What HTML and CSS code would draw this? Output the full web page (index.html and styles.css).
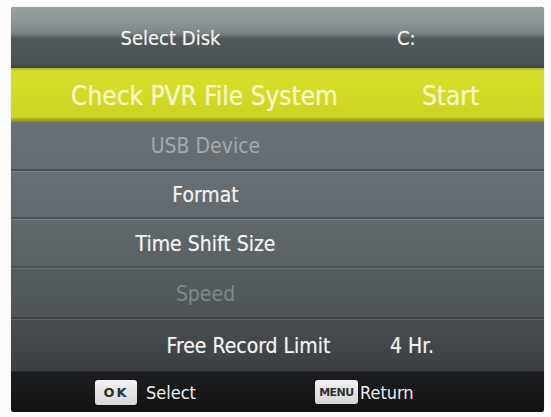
FILE: index.html
```html
<!DOCTYPE html>
<html lang="en">
<head>
<meta charset="utf-8">
<title>PVR File System</title>
<link rel="stylesheet" href="styles.css">
</head>
<body>
<div class="screen">
  <div class="row row-top">
    <span class="label label-disk">Select Disk</span>
    <span class="value value-disk">C:</span>
  </div>
  <div class="row row-active">
    <span class="label label-check">Check PVR File System</span>
    <span class="value value-start">Start</span>
  </div>
  <div class="row row-usb">
    <span class="label dim">USB Device</span>
  </div>
  <div class="row row-format">
    <span class="label">Format</span>
  </div>
  <div class="row row-shift">
    <span class="label">Time Shift Size</span>
  </div>
  <div class="row row-speed">
    <span class="label dimmer">Speed</span>
  </div>
  <div class="row row-limit">
    <span class="label label-limit">Free Record Limit</span>
    <span class="value value-limit">4 Hr.</span>
  </div>
  <div class="hints">
    <div class="hint hint-ok"><span class="key key-ok">OK</span><span class="hint-text">Select</span></div>
    <div class="hint hint-menu"><span class="key key-menu">MENU</span><span class="hint-text">Return</span></div>
  </div>
</div>
</body>
</html>
```
FILE: styles.css
```css
html, body {
  margin: 0;
  padding: 0;
  background: #fbfbfb;
}

body {
  font-family: "Liberation Sans Narrow", "DejaVu Sans Condensed", "Liberation Sans", sans-serif;
  color: #f2f2ee;
}

.screen {
  margin: 7px 7px 0 11px;
  width: 533px;
  height: 405px;
  display: flex;
  flex-direction: column;
  border-radius: 3px;
  overflow: hidden;
  background: #5f666a;
  box-shadow: 0 0 1px rgba(0, 0, 0, 0.4);
}

.row {
  display: grid;
  grid-template-columns: 389px 1fr;
  align-items: center;
  font-size: 21px;
  text-shadow: 0 0 1px rgba(255, 255, 255, 0.45);
  box-shadow: inset 0 -2px 0 #4a5154, inset 0 1px 0 #7b8388;
}

.label {
  text-align: center;
}

.value {
  white-space: nowrap;
}

/* header row with the glossy band */
.row-top {
  height: 61px;
  background: linear-gradient(to bottom, #9ba0a1 0, #8d9599 22%, #7d8589 42%, #51585b 52%, #4c5356 92%, #3f4547 100%);
  box-shadow: none;
  font-size: 20px;
}

.label-disk {
  padding-right: 70px;
}

.value-disk {
  margin-left: -3px;
}

/* highlighted entry */
.row-active {
  height: 53px;
  padding-top: 3px;
  box-sizing: border-box;
  background: linear-gradient(to bottom, #a8b020 0, #d6e02a 6%, #d2dc26 50%, #ccd422 92%, #8e9418 100%);
  box-shadow: none;
  font-size: 26px;
  color: #f3f4c8;
  text-shadow: 0 0 1px rgba(255, 255, 220, 0.6);
}

.label-check {
  padding-right: 2px;
}

.value-start {
  padding-left: 22px;
}

.row-usb {
  height: 50px;
  background: linear-gradient(to bottom, #6a7277, #656c71);
}

.row-format {
  height: 48px;
  background: linear-gradient(to bottom, #686f74, #62696e);
}

.row-shift {
  height: 49px;
  background: linear-gradient(to bottom, #61686c, #5a6165);
}

.row-speed {
  height: 51px;
  background: linear-gradient(to bottom, #565d61, #4d5357);
  box-shadow: inset 0 -2px 0 #3d4245, inset 0 1px 0 #6a7175;
}

.row-limit {
  height: 53px;
  background: linear-gradient(to bottom, #484d51, #3c4044);
  box-shadow: inset 0 1px 0 #5d6367, inset 0 -1px 0 #2b2e30;
}

.label-limit {
  padding-left: 86px;
}

.value-limit {
  margin-left: -10px;
}

.dim {
  color: #a3a9ad;
  text-shadow: none;
}

.dimmer {
  color: #7f868a;
  text-shadow: none;
}

/* key hints */
.hints {
  flex: 1;
  display: flex;
  align-items: center;
  padding-left: 84px;
  background: linear-gradient(to bottom, #1c1d1e, #121212);
  font-size: 18px;
}

.hint {
  display: flex;
  align-items: center;
  gap: 9px;
}

.hint-menu {
  margin-left: 119px;
  gap: 2px;
}

.key {
  display: inline-flex;
  align-items: center;
  justify-content: center;
  border-radius: 3px;
  font-family: "DejaVu Sans", sans-serif;
  font-weight: bold;
  color: #2d2f32;
  background: linear-gradient(to bottom, #f2f2f2, #d5d6d8);
}

.key-ok {
  width: 42px;
  height: 25px;
  font-size: 13px;
  letter-spacing: 2px;
}

.key-menu {
  width: 43px;
  height: 24px;
  font-size: 11px;
  letter-spacing: -0.5px;
}

.hint-text {
  color: #eeeeee;
}
```
